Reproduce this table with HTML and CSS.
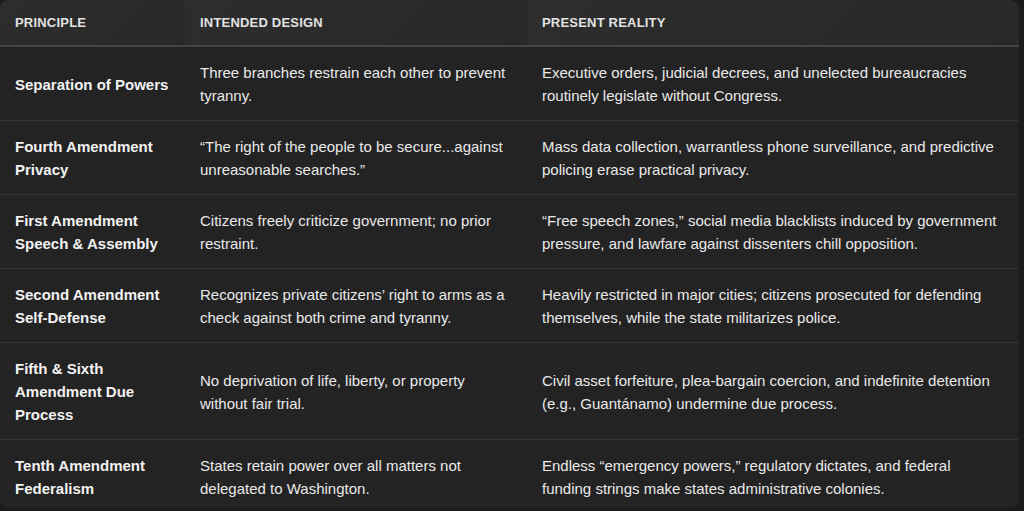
FILE: index.html
```html
<!DOCTYPE html>
<html lang="en">
<head>
<meta charset="utf-8">
<title>Principles</title>
<link rel="stylesheet" href="styles.css">
</head>
<body>
<div class="wrap">
<table class="grid">
<colgroup><col class="c1"><col class="c2"><col class="c3"></colgroup>
<thead>
<tr><th>Principle</th><th>Intended Design</th><th>Present Reality</th></tr>
</thead>
<tbody>
<tr><td>Separation of Powers</td><td>Three branches restrain each other to prevent tyranny.</td><td>Executive orders, judicial decrees, and unelected bureaucracies routinely legislate without Congress.</td></tr>
<tr><td>Fourth Amendment Privacy</td><td>“The right of the people to be secure...against unreasonable searches.”</td><td>Mass data collection, warrantless phone surveillance, and predictive policing erase practical privacy.</td></tr>
<tr><td>First Amendment Speech &amp; Assembly</td><td>Citizens freely criticize government; no prior restraint.</td><td>“Free speech zones,” social media blacklists induced by government pressure, and lawfare against dissenters chill opposition.</td></tr>
<tr><td>Second Amendment Self-Defense</td><td>Recognizes private citizens’ right to arms as a check against both crime and tyranny.</td><td>Heavily restricted in major cities; citizens prosecuted for defending themselves, while the state militarizes police.</td></tr>
<tr><td>Fifth &amp; Sixth Amendment Due Process</td><td>No deprivation of life, liberty, or property without fair trial.</td><td>Civil asset forfeiture, plea-bargain coercion, and indefinite detention (e.g., Guantánamo) undermine due process.</td></tr>
<tr><td>Tenth Amendment Federalism</td><td>States retain power over all matters not delegated to Washington.</td><td>Endless “emergency powers,” regulatory dictates, and federal funding strings make states administrative colonies.</td></tr>
</tbody>
</table>
</div>
</body>
</html>
```
FILE: styles.css
```css
html, body {
  margin: 0;
  padding: 0;
  background: #1b1b1b;
}
body {
  font-family: "Liberation Sans", Arial, sans-serif;
  color: #e9e9e9;
}
.wrap {
  width: 1019px;
  height: 508px;
  background: #232323;
  border-radius: 9px;
  overflow: hidden;
}
.grid {
  width: 100%;
  border-collapse: collapse;
  table-layout: fixed;
}
.c1 { width: 185px; }
.c2 { width: 342px; }
.grid th {
  text-align: left;
  text-transform: uppercase;
  font-size: 13px;
  font-weight: 600;
  letter-spacing: 0.2px;
  color: #e2e2e2;
  height: 45px;
  padding: 0 15px;
  background: linear-gradient(135deg, #2d2d2d, #282828);
  border-bottom: 2px solid #454545;
}
.grid td {
  font-size: 15px;
  line-height: 23px;
  padding: 14px 15px 13px;
  vertical-align: middle;
  border-bottom: 1px solid #343434;
}
.grid td:last-child { padding-right: 17px; }
.grid tbody tr:last-child td { border-bottom: none; }
.grid td:first-child {
  font-weight: 700;
  color: #f2f2f2;
}
```
